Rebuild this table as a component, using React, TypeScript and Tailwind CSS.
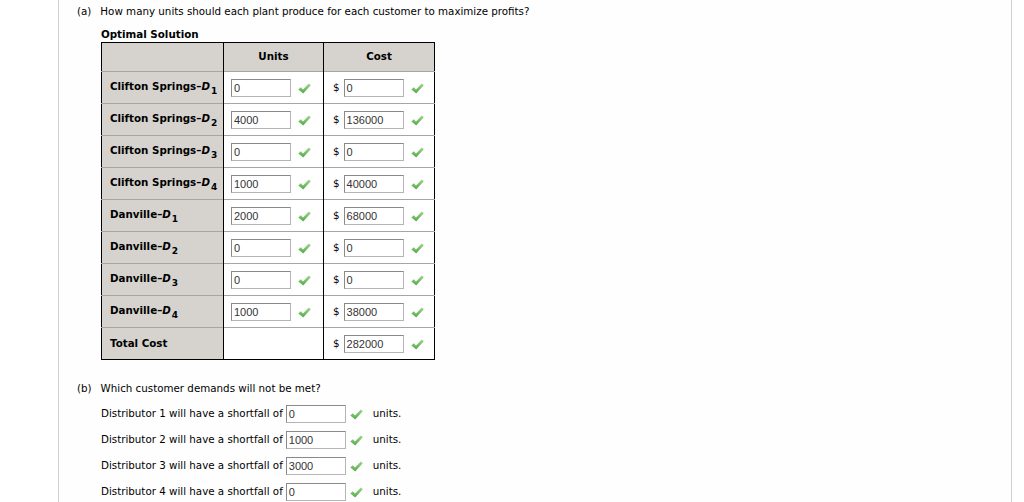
import React from 'react'

type Row = {
  plant: string
  d: number
  units: string
  cost: string
}

const rows: Row[] = [
  { plant: 'Clifton Springs', d: 1, units: '0', cost: '0' },
  { plant: 'Clifton Springs', d: 2, units: '4000', cost: '136000' },
  { plant: 'Clifton Springs', d: 3, units: '0', cost: '0' },
  { plant: 'Clifton Springs', d: 4, units: '1000', cost: '40000' },
  { plant: 'Danville', d: 1, units: '2000', cost: '68000' },
  { plant: 'Danville', d: 2, units: '0', cost: '0' },
  { plant: 'Danville', d: 3, units: '0', cost: '0' },
  { plant: 'Danville', d: 4, units: '1000', cost: '38000' },
]

const shortfalls = ['0', '1000', '3000', '0']

function Check() {
  return (
    <svg width="13" height="11" viewBox="0 0 13 11" className="inline-block shrink-0">
      <defs>
        <linearGradient id="chk" x1="0" y1="0" x2="0" y2="1">
          <stop offset="0" stopColor="#9bd88d" />
          <stop offset="1" stopColor="#57a84a" />
        </linearGradient>
      </defs>
      <path d="M0.3 6.4 L2.8 4.3 L5 6.6 L10.8 0.4 L12.8 2.3 L5.2 10.6 Z" fill="url(#chk)" />
    </svg>
  )
}

function Field({ value }: { value: string }) {
  return (
    <div className="w-[60px] h-[18px] border border-[#b5b5b5] border-t-[#8a8a8a] border-l-[#8a8a8a] bg-white px-[2px] flex items-center text-[11px] leading-none text-[#333] font-['Liberation_Sans',Arial,sans-serif]">
      {value}
    </div>
  )
}

function Label({ row }: { row: Row }) {
  return (
    <span className="font-bold">
      {row.plant}–<i>D</i>
      <span className="text-[9px] relative top-[4px] ml-[1px]">{row.d}</span>
    </span>
  )
}

export default function App() {
  return (
    <div className="w-[1024px] h-[502px] bg-white font-['DejaVu_Sans',Verdana,sans-serif] text-[10.3px] text-black overflow-hidden">
      <div className="ml-[58px] w-[954px] h-[502px] border-l border-r border-[#cfcfcf] bg-[#fefefe] pl-[18px] pt-[4px]">
        <div className="flex gap-[9px] leading-[14px]">
          <span>(a)</span>
          <span>How many units should each plant produce for each customer to maximize profits?</span>
        </div>

        <div className="pl-[24px]">
          <p className="font-bold mt-[9px] leading-[14px]">Optimal Solution</p>

          <table className="mt-[1px] border-collapse border border-black table-fixed w-[333px]">
            <thead>
              <tr className="h-[29px] bg-[#d6d3ce]">
                <th className="w-[122px] border-r border-black" />
                <th className="w-[100px] border-r border-black font-bold">Units</th>
                <th className="w-[111px] font-bold">Cost</th>
              </tr>
            </thead>
            <tbody>
              {rows.map((row, i) => (
                <tr key={i} className="h-[32px] border-t border-[#a8a6a2]">
                  <td className="bg-[#d6d3ce] border-r border-black pl-[8px] pb-[1px] align-middle whitespace-nowrap">
                    <Label row={row} />
                  </td>
                  <td className="border-r border-black pl-[7px] pt-[1px] bg-white">
                    <div className="flex items-center gap-[7px]">
                      <Field value={row.units} />
                      <Check />
                    </div>
                  </td>
                  <td className="pl-[9px] pt-[1px] bg-white">
                    <div className="flex items-center gap-[7px]">
                      <span className="mr-[-3px]">$</span>
                      <Field value={row.cost} />
                      <Check />
                    </div>
                  </td>
                </tr>
              ))}
              <tr className="h-[32px] border-t border-[#a8a6a2]">
                <td className="bg-[#d6d3ce] border-r border-black pl-[8px] font-bold">Total Cost</td>
                <td className="border-r border-black bg-white" />
                <td className="pl-[9px] pt-[1px] bg-white">
                  <div className="flex items-center gap-[7px]">
                    <span className="mr-[-3px]">$</span>
                    <Field value="282000" />
                    <Check />
                  </div>
                </td>
              </tr>
            </tbody>
          </table>
        </div>

        <div className="flex gap-[9px] leading-[14px] mt-[21px]">
          <span>(b)</span>
          <span>Which customer demands will not be met?</span>
        </div>

        <div className="pl-[24px] mt-[10px] flex flex-col gap-[8px]">
          {shortfalls.map((v, i) => (
            <div key={i} className="flex items-center h-[18px]">
              <span className="mr-[3px]">Distributor {i + 1} will have a shortfall of</span>
              <Field value={v} />
              <span className="ml-[4px] flex">
                <Check />
              </span>
              <span className="ml-[10px]">units.</span>
            </div>
          ))}
        </div>
      </div>
    </div>
  )
}
